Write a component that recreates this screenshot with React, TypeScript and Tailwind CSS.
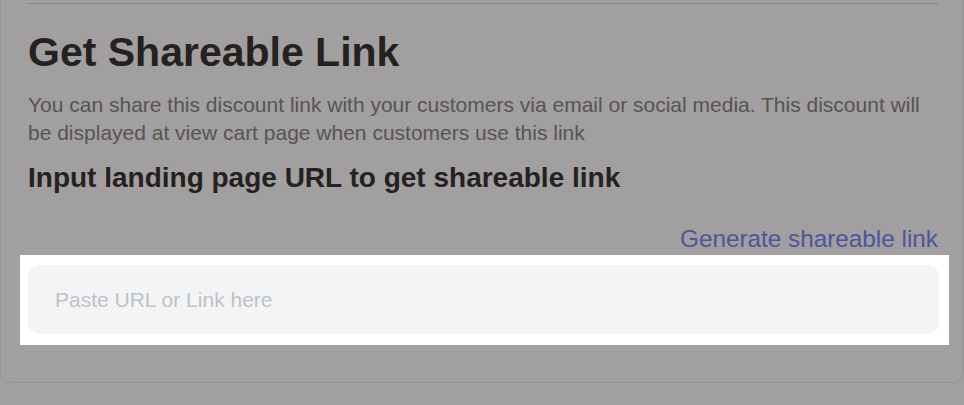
import React from "react";

export default function App() {
  return (
    <div className="relative min-h-screen bg-white font-['Liberation_Sans',Arial,sans-serif]">
      <div className="rounded-b-xl border-x border-b border-[#ececec] pl-[27px] pr-[25px] pb-[37px]">
        <div className="h-[3px]" />
        <div className="h-px bg-[#d3d3d3]" />
        <h1 className="mt-[24px] text-[41px] font-bold leading-[48px] text-[#393536]">
          Get Shareable Link
        </h1>
        <p className="mt-[15px] text-[21px] leading-[28px] text-[#8a8789]">
          You can share this discount link with your customers via email or social media. This discount will be
          displayed at view cart page when customers use this link
        </p>
        <h2 className="mt-[14px] text-[28px] font-bold leading-[34px] text-[#393536]">
          Input landing page URL to get shareable link
        </h2>
        <div className="mt-[28px] flex justify-end">
          <a href="#" className="text-[24.3px] leading-[32px] text-[#7a8af8]">
            Generate shareable link
          </a>
        </div>
        <div className="relative z-50 -ml-[8px] -mr-[11px] bg-white pl-[8px] pr-[10px] pt-[10px] pb-[11px]">
          <input
            type="text"
            placeholder="Paste URL or Link here"
            className="h-[69px] w-full rounded-xl bg-[#f3f4f6] px-[27px] text-[21px] text-[#333] outline-none placeholder:text-[#bfc2c6]"
          />
        </div>
      </div>
      <div className="fixed inset-0 z-40 bg-[rgba(4,0,0,0.375)]" />
    </div>
  );
}
